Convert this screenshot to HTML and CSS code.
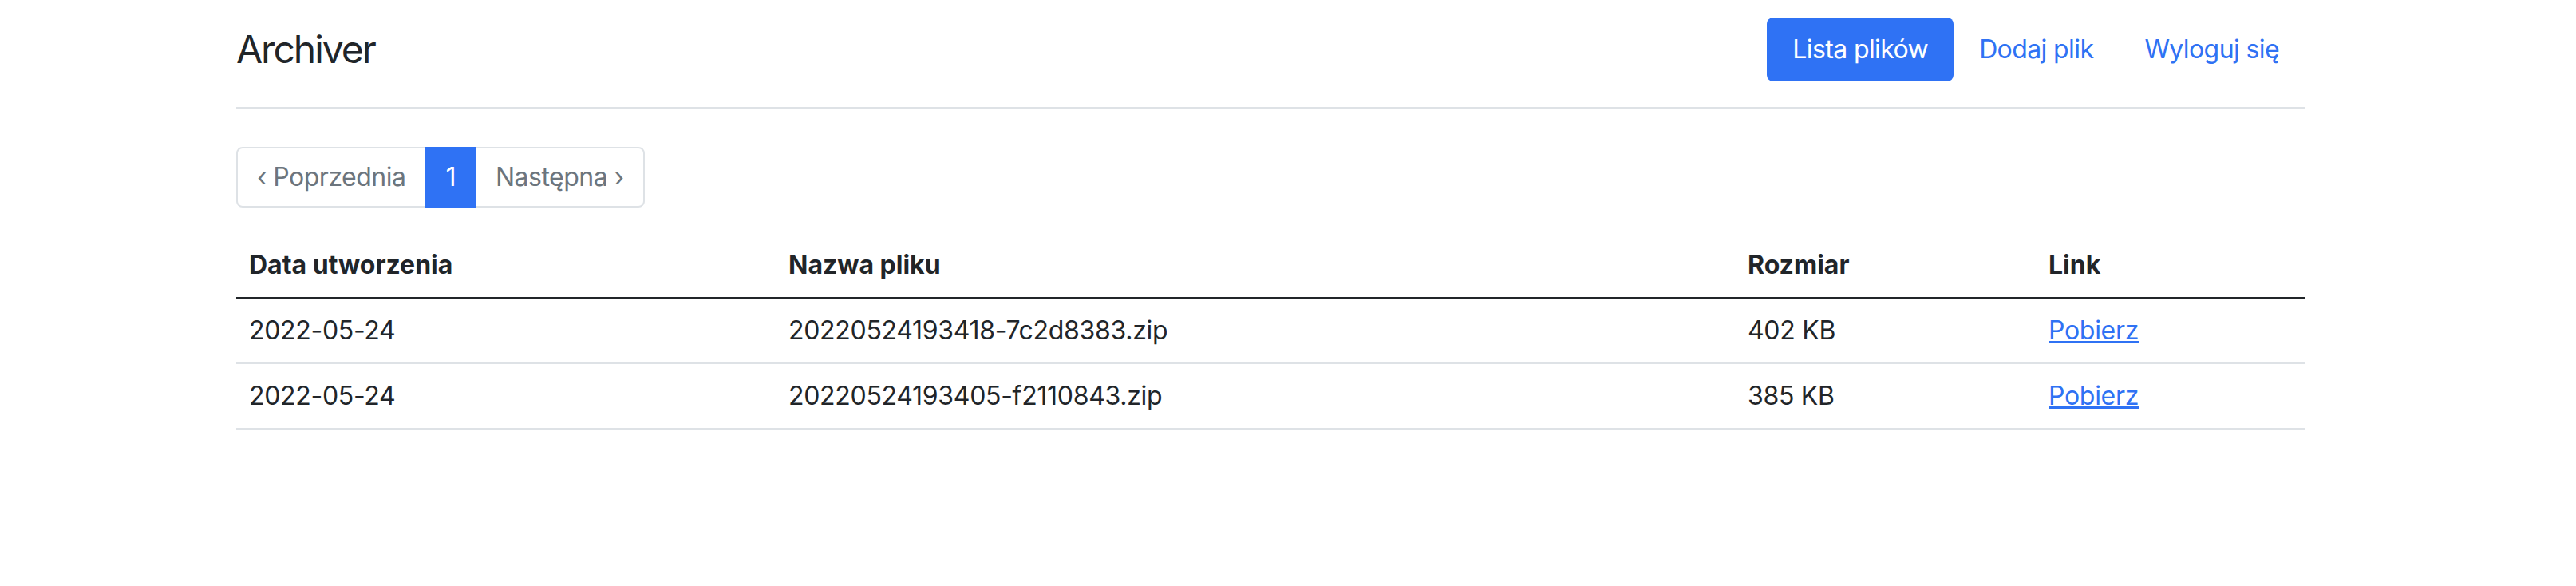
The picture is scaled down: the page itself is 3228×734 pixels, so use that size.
FILE: index.html
```html
<!DOCTYPE html>
<html lang="pl">
<head>
<meta charset="utf-8">
<title>Archiver</title>
<link rel="stylesheet" href="styles.css">
</head>
<body>
<div class="viewport">
  <div class="container">
    <header class="header">
      <a class="brand" href="#">Archiver</a>
      <ul class="nav">
        <li><a class="nav-link active" href="#">Lista plików</a></li>
        <li><a class="nav-link" href="#">Dodaj plik</a></li>
        <li><a class="nav-link" href="#">Wyloguj się</a></li>
      </ul>
    </header>

    <ul class="pagination">
      <li><span class="page-link first">‹ Poprzednia</span></li>
      <li><span class="page-link active">1</span></li>
      <li><span class="page-link last">Następna ›</span></li>
    </ul>

    <table class="table">
      <colgroup>
        <col class="c-date">
        <col class="c-name">
        <col class="c-size">
        <col class="c-link">
      </colgroup>
      <thead>
        <tr>
          <th>Data utworzenia</th>
          <th>Nazwa pliku</th>
          <th>Rozmiar</th>
          <th>Link</th>
        </tr>
      </thead>
      <tbody>
        <tr>
          <td>2022-05-24</td>
          <td>20220524193418-7c2d8383.zip</td>
          <td>402 KB</td>
          <td><a class="link" href="#">Pobierz</a></td>
        </tr>
        <tr>
          <td>2022-05-24</td>
          <td>20220524193405-f2110843.zip</td>
          <td>385 KB</td>
          <td><a class="link" href="#">Pobierz</a></td>
        </tr>
      </tbody>
    </table>
  </div>
</div>
</body>
</html>
```

FILE: styles.css
```css
* {
  box-sizing: border-box;
}

html, body {
  margin: 0;
  padding: 0;
  background: #ffffff;
}

body {
  font-family: Inter, "Liberation Sans", Arial, sans-serif;
  font-size: 32px;
  line-height: 1.5;
  color: #212529;
}

.viewport {
  width: 3184px;
}

.container {
  max-width: 2640px;
  margin: 0 auto;
  padding: 0 24px;
}

.header {
  display: flex;
  align-items: center;
  justify-content: space-between;
  padding: 22px 0 32px;
  border-bottom: 2px solid #dee2e6;
  margin-bottom: 48px;
}

.brand {
  font-size: 48px;
  line-height: 1.5;
  letter-spacing: -2px;
  color: #212529;
  text-decoration: none;
}

.nav {
  display: flex;
  list-style: none;
  margin: 0;
  padding: 0;
}

.nav-link {
  display: block;
  padding: 16px 32px;
  letter-spacing: -0.6px;
  color: #2f72f4;
  text-decoration: none;
  border-radius: 8px;
}

.nav-link.active {
  background: #2f72f4;
  color: #ffffff;
}

.pagination {
  display: flex;
  list-style: none;
  margin: 0 0 32px;
  padding: 0;
}

.page-link {
  display: block;
  padding: 12px 24px;
  border: 2px solid #dee2e6;
  color: #6c757d;
  background: #ffffff;
  letter-spacing: -0.5px;
  margin-left: -2px;
}

.page-link.first {
  margin-left: 0;
  border-radius: 8px 0 0 8px;
}

.page-link.last {
  border-radius: 0 8px 8px 0;
}

.page-link.active {
  background: #2f72f4;
  border-color: #2f72f4;
  color: #ffffff;
  position: relative;
  z-index: 1;
}

.table {
  width: 100%;
  border-collapse: collapse;
  table-layout: fixed;
  margin-bottom: 32px;
}

.c-date { width: 676px; }
.c-name { width: 1202px; }
.c-size { width: 377px; }
.c-link { width: 337px; }

.table th,
.table td {
  padding: 16px;
  text-align: left;
  border-bottom: 2px solid #dee2e6;
}

.table td {
  letter-spacing: -0.3px;
}

.table th {
  font-weight: 700;
  border-bottom-color: #212529;
  vertical-align: bottom;
}

.link {
  color: #2f72f4;
  text-decoration: underline;
}
```
